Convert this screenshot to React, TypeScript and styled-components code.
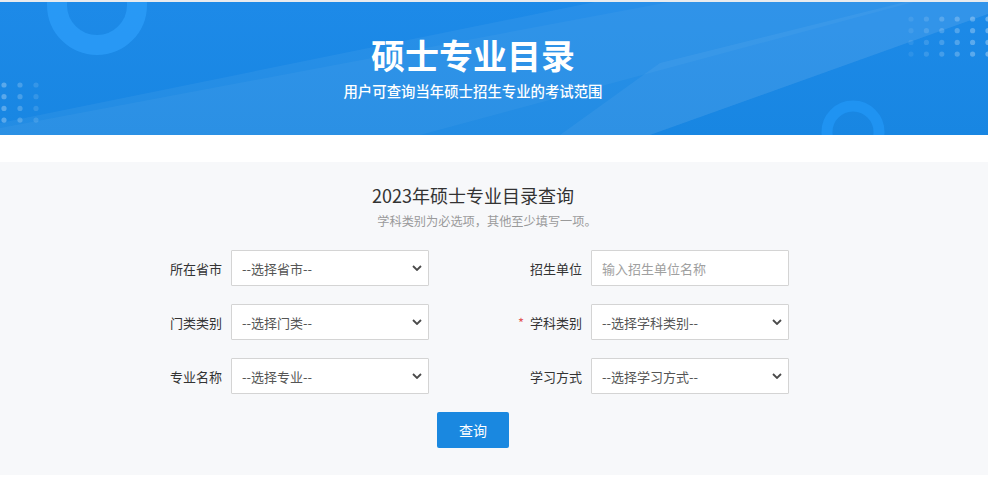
import React from 'react';
import styled, { createGlobalStyle } from 'styled-components';

const GlobalStyle = createGlobalStyle`
  body {
    margin: 0;
    background: #ffffff;
    font-family: "Noto Sans CJK SC", "Noto Sans", sans-serif;
  }
`;

const fields = [
  { label: '所在省市', placeholder: '--选择省市--', kind: 'select' },
  { label: '招生单位', placeholder: '输入招生单位名称', kind: 'input' },
  { label: '门类类别', placeholder: '--选择门类--', kind: 'select' },
  { label: '学科类别', placeholder: '--选择学科类别--', kind: 'select', required: true },
  { label: '专业名称', placeholder: '--选择专业--', kind: 'select' },
  { label: '学习方式', placeholder: '--选择学习方式--', kind: 'select' },
];

function BannerArt() {
  const leftDots = [];
  for (let r = 0; r < 4; r++) {
    for (let c = 0; c < 3; c++) {
      leftDots.push(
        <circle key={`l${r}${c}`} cx={4 + c * 16} cy={83 + r * 11.7} r={2.6} fill="#ffffff" opacity={0.28 - c * 0.08} />
      );
    }
  }
  const rightDots = [];
  for (let r = 0; r < 4; r++) {
    for (let c = 0; c < 6; c++) {
      rightDots.push(
        <circle key={`r${r}${c}`} cx={911 + c * 15.4} cy={17 + r * 11.7} r={2.6} fill="#ffffff" opacity={0.08 + c * 0.05} />
      );
    }
  }
  return (
    <Art viewBox="0 0 988 133" preserveAspectRatio="none">
      <polygon points="0,121 988,-80 988,12 650,133 0,133" fill="#ffffff" opacity={0.05} />
      <polygon points="0,133 0,126 988,-60 988,-20 420,133" fill="#ffffff" opacity={0.04} />
      <polygon points="660,61 913,-2 988,-2 988,12 650,133 560,133" fill="#ffffff" opacity={0.05} />
      <circle cx={97} cy={3} r={40} fill="none" stroke="#2a9bf7" strokeWidth={20} opacity={0.85} />
      <circle cx={853} cy={130} r={26} fill="none" stroke="#1f93f2" strokeWidth={11} />
      {leftDots}
      {rightDots}
    </Art>
  );
}

function Chevron() {
  return (
    <ChevronIcon width="10" height="6" viewBox="0 0 10 6">
      <path d="M1 1 L5 5 L9 1" fill="none" stroke="#4a4a4a" strokeWidth="1.8" />
    </ChevronIcon>
  );
}

export default function App() {
  return (
    <>
      <GlobalStyle />
      <Page>
        <Banner>
          <BannerArt />
          <BannerInner>
            <Title>硕士专业目录</Title>
            <Subtitle>用户可查询当年硕士招生专业的考试范围</Subtitle>
          </BannerInner>
        </Banner>
        <Panel>
          <Heading>2023年硕士专业目录查询</Heading>
          <Hint>学科类别为必选项，其他至少填写一项。</Hint>
          <FormGrid>
            {fields.map((f) => (
              <Field key={f.label}>
                <Label>
                  {f.required && <Star>*</Star>}
                  {f.label}
                </Label>
                {f.kind === 'select' ? (
                  <SelectWrap>
                    <Select defaultValue="">
                      <option value="">{f.placeholder}</option>
                    </Select>
                    <Chevron />
                  </SelectWrap>
                ) : (
                  <TextInput placeholder={f.placeholder} />
                )}
              </Field>
            ))}
          </FormGrid>
          <SearchButton>查询</SearchButton>
        </Panel>
      </Page>
    </>
  );
}

// --------------- Styled ---------------
const Page = styled.div`
  border-top: 2px solid #e9ebee;
`;

const Banner = styled.header`
  position: relative;
  height: 133px;
  overflow: hidden;
  background: linear-gradient(180deg, #1d8ae8 0%, #1886e2 100%);
`;

const Art = styled.svg`
  position: absolute;
  inset: 0;
  width: 100%;
  height: 100%;
`;

const BannerInner = styled.div`
  position: relative;
  width: 946px;
  padding-top: 33px;
  text-align: center;
  color: #ffffff;
`;

const Title = styled.h1`
  margin: 0;
  font-size: 34px;
  font-weight: 700;
  line-height: 40px;
`;

const Subtitle = styled.p`
  margin: 6px 0 0;
  font-size: 14.4px;
  font-weight: 500;
  line-height: 20px;
`;

const Panel = styled.section`
  margin-top: 27px;
  height: 313px;
  box-sizing: border-box;
  padding-top: 20px;
  background: #f7f8fa;
`;

const Heading = styled.h2`
  margin: 0;
  width: 946px;
  text-align: center;
  font-size: 18px;
  font-weight: 400;
  line-height: 26px;
  color: #333333;
`;

const Hint = styled.p`
  margin: 4px 0 0;
  width: 974px;
  text-align: center;
  font-size: 12.2px;
  line-height: 18px;
  color: #9a9a9a;
`;

const FormGrid = styled.div`
  margin: 20px 0 0 69px;
  display: grid;
  grid-template-columns: 360px 360px;
  row-gap: 18px;
`;

const Field = styled.div`
  display: flex;
  align-items: center;
  height: 36px;
`;

const Label = styled.label`
  width: 162px;
  box-sizing: border-box;
  padding-right: 9px;
  text-align: right;
  font-size: 13px;
  color: #333333;
`;

const Star = styled.span`
  color: #e25656;
  margin-right: 6px;
`;

const SelectWrap = styled.div`
  position: relative;
  width: 198px;
  height: 36px;
`;

const Select = styled.select`
  appearance: none;
  width: 100%;
  height: 100%;
  box-sizing: border-box;
  padding: 0 24px 0 10px;
  border: 1px solid #d4d4d4;
  border-radius: 1px;
  background: #ffffff;
  font-family: inherit;
  font-size: 13px;
  color: #555555;
  outline: none;
`;

const ChevronIcon = styled.svg`
  position: absolute;
  right: 7px;
  top: 15px;
  pointer-events: none;
`;

const TextInput = styled.input`
  width: 198px;
  height: 36px;
  box-sizing: border-box;
  padding: 0 10px;
  border: 1px solid #d4d4d4;
  border-radius: 1px;
  background: #ffffff;
  font-family: inherit;
  font-size: 13px;
  color: #555555;
  outline: none;
  &::placeholder {
    color: #a0a0a0;
  }
`;

const SearchButton = styled.button`
  display: block;
  margin: 18px 0 0 437px;
  width: 72px;
  height: 36px;
  border: none;
  border-radius: 2px;
  background: #1a88e0;
  color: #ffffff;
  font-family: inherit;
  font-size: 14px;
  cursor: pointer;
`;
